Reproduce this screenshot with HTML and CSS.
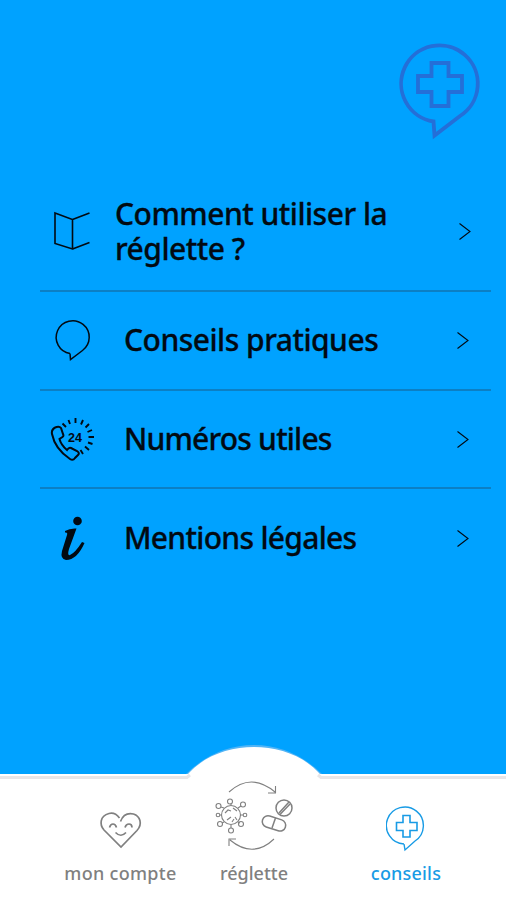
FILE: index.html
```html
<!DOCTYPE html>
<html lang="fr">
<head>
<meta charset="utf-8">
<meta name="viewport" content="width=device-width, initial-scale=1">
<title>Conseils</title>
<link rel="stylesheet" href="styles.css">
</head>
<body>
<main class="screen">
  <header class="header">
    <svg class="brand" viewBox="0 0 84 100" width="84" height="100">
      <path d="M35.500 80.500A38.300 38.300 0 1 1 62 75L36.500 94.500Z" stroke-linejoin="miter"/>
      <path d="M33.500 22H50.500V35H64V51H50.500V65H33.500V51H20V35H33.500Z"/>
    </svg>
  </header>
  <ul class="menu">
    <li class="item item-tall">
      <svg class="icon" viewBox="0 0 46 46" width="46" height="46"><path d="M5 5L22.500 11.500V41L5 35.500ZM22.500 11.500L39.500 5M22.500 41L39.500 34.500" stroke-width="1.600"/></svg>
      <span class="label l1">Comment utiliser la<br>réglette ?</span>
      <svg class="chevron" viewBox="0 0 12 18" width="12" height="18"><path d="M.5 1.500L11 9.500L.5 17.500"/></svg>
    </li>
    <li class="item">
      <svg class="icon" viewBox="0 0 46 46" width="46" height="46"><path d="M20 36.500A16.500 16.500 0 1 1 32.500 33.500L20.500 42.500L20 36.500" stroke-width="1.500"/></svg>
      <span class="label l2">Conseils pratiques</span>
      <svg class="chevron" viewBox="0 0 12 18" width="12" height="18"><path d="M.5 1.500L11 9.500L.5 17.500"/></svg>
    </li>
    <li class="item">
      <svg class="icon" viewBox="0 0 46 46" width="46" height="46">
        <path d="M6.500 11Q1 13 2 18Q5 33 20 43Q23 45 25 42L28 39Q30 37 27 35L21 32Q19 31 17 34Q11 29 9.500 23L12.500 21Q14 20 13 18L11 12Q9.500 10 6.500 11Z" stroke-width="2"/>
        <path d="M12.500 7.500L16 11M18.500 4L20 8M25.500 2V7M33 4L31 8.500M39 8L35.500 11.500M42 14L37.500 16M44 21H38.500M42.500 28L38 26.500M39 34L35 30.500M33 38L30.500 34" stroke-width="1.900"/>
        <text class="hours" x="18" y="25.500" textLength="14" lengthAdjust="spacingAndGlyphs">24</text>
      </svg>
      <span class="label l3">Numéros utiles</span>
      <svg class="chevron" viewBox="0 0 12 18" width="12" height="18"><path d="M.5 1.500L11 9.500L.5 17.500"/></svg>
    </li>
    <li class="item">
      <svg class="icon solid" viewBox="0 0 46 46" width="46" height="46"><circle cx="27.500" cy="6" r="4.300"/><path d="M15 16Q20 13 26.500 13.500L19 34Q17 41 20 40Q25 38 32 27L34.500 28Q27 45 16 45Q10 44 12 36L17 20Q18 17 15 17.500Z"/></svg>
      <span class="label l4">Mentions légales</span>
      <svg class="chevron" viewBox="0 0 12 18" width="12" height="18"><path d="M.5 1.500L11 9.500L.5 17.500"/></svg>
    </li>
  </ul>
  <nav class="nav">
    <svg class="nav-shape" viewBox="0 0 506 158" width="506" height="158">
      <path class="glow" d="M0 32H186Q216 3 254 3T322 32H506V158H0Z"/>
      <path class="surface" d="M0 32H188C205 13 230 5 254 5S303 13 320 32H506V158H0Z"/>
      <path class="shade" d="M0 35.500H187L190 33M506 35.500H321L318 33"/>
    </svg>
    <a class="tab account">
      <svg class="tab-icon" viewBox="0 0 46 40" width="46" height="40"><path d="M21.500 8Q17 2 11 3.500C1.500 6 1.500 15 6 20L23 37L39 20.500C45 14 42 6 35.500 4Q26 2 22.500 11.500M11.500 17.500Q12.500 14 15 14T18.500 17.500M27 17.500Q28 14 31 14T34 17.500M17.500 22.500Q23 28 28 22.500" stroke-width="1.700"/></svg>
      <span class="account-text">mon compte</span>
    </a>
    <a class="tab center">
      <svg class="tab-icon" viewBox="0 0 82 72" width="82" height="72">
        <g stroke-width="1.100">
          <path d="M16 13Q38-7 62 13M62.500 7V14H55M61 60Q40 80 17 61M16 67V60H23"/>
          <circle cx="18" cy="36" r="9.500"/>
          <path d="M18 26V24.500M18 46V49M8 36H7M28 36H30M11 29L8 28M25 29L28 27M11 43L9 44M25 43L27 44M12 34L15 31L18 32M20 29L24 32M14 41L18 38M22 38L24 41M19 43L21 40"/>
          <circle cx="17" cy="22.500" r="2.500"/><circle cx="18" cy="51.500" r="2.500"/><circle cx="5.500" cy="27" r="2.500"/><circle cx="30" cy="25.500" r="2.500"/><circle cx="5" cy="36" r="1.800"/><circle cx="32" cy="36" r="1.800"/><circle cx="7" cy="45" r="2.500"/><circle cx="28" cy="45" r="2.500"/>
        </g>
        <g stroke-width="1.500"><circle cx="71" cy="29" r="8"/><path d="M66 34L76 23M67 35.500L77 25"/><rect x="49" y="38.500" width="24" height="11.500" rx="5.700" transform="rotate(18 60.500 44.250)"/><path d="M62.500 39L59 49"/></g>
      </svg>
      <span class="center-text">réglette</span>
    </a>
    <a class="tab active">
      <svg class="tab-icon" viewBox="0 0 40 48" width="40" height="48"><path d="M18 39A18.500 18.500 0 1 1 29 36L19 45L18 39" stroke-width="1.400"/><path d="M17 10.500H24V17.500H31V25.500H24V32H17V25.500H10.500V17.500H17Z" stroke-width="1.600"/></svg>
      <span class="active-text">conseils</span>
    </a>
  </nav>
</main>
</body>
</html>
```
FILE: styles.css
```css
* { box-sizing: border-box; }
body { margin: 0; font-family: "Noto Sans", sans-serif; }
svg { fill: none; stroke: currentColor; flex: none; display: block; }
.screen { width: 506px; height: 900px; display: flex; flex-direction: column; background: #00a2ff; overflow: hidden; color: #020a12; }
.header { height: 172px; padding: 41px 24px 0; display: flex; justify-content: flex-end; color: #246fd8; }
.brand { stroke-width: 3.800; }
.menu { list-style: none; margin: 0 15px 0 40px; padding: 0; flex: 1; }
.item { height: 98.500px; display: flex; align-items: center; padding: 0 22px 0 10px; border-bottom: 2px solid #0c7fc4; }
.item:last-child { border-bottom: 0; }
.item-tall { height: 120px; padding-right: 20px; }
.label { margin-left: 28px; padding-bottom: 1px; flex: 1; white-space: nowrap; font-size: 30px; line-height: 35px; font-weight: 500; -webkit-text-stroke: .3px; }
.item-tall .label { margin-left: 19px; padding-bottom: 0; }
.l1 { letter-spacing: -.5px; }
.l2 { letter-spacing: -.5px; }
.l3 { letter-spacing: -.8px; }
.l4 { letter-spacing: -.7px; }
.chevron { stroke-width: 1.100; }
.hours { font: bold 13.500px "Liberation Sans", sans-serif; fill: currentColor; stroke: none; }
.solid { fill: currentColor; stroke: none; }
.nav { height: 126px; position: relative; display: grid; grid-template-columns: 187px 134px 185px; color: #808080; }
.nav-shape { position: absolute; left: 0; bottom: 0; stroke: none; }
.glow { fill: #53b4f5; }
.surface { fill: #fff; }
.shade { stroke: #e8e6e8; stroke-width: 3; }
.tab { position: relative; display: flex; flex-direction: column; align-items: center; justify-content: flex-end; padding-bottom: 14px; font-size: 18px; line-height: 26px; font-weight: 500; }
.account { padding-left: 54px; }
.account-text { letter-spacing: .3px; }
.active-text { letter-spacing: .2px; }
.account .tab-icon { margin-bottom: 10px; }
.center .tab-icon { margin-bottom: 9px; }
.active { padding-right: 15px; color: #189be5; }
.active .tab-icon { margin-bottom: 7px; }
```
